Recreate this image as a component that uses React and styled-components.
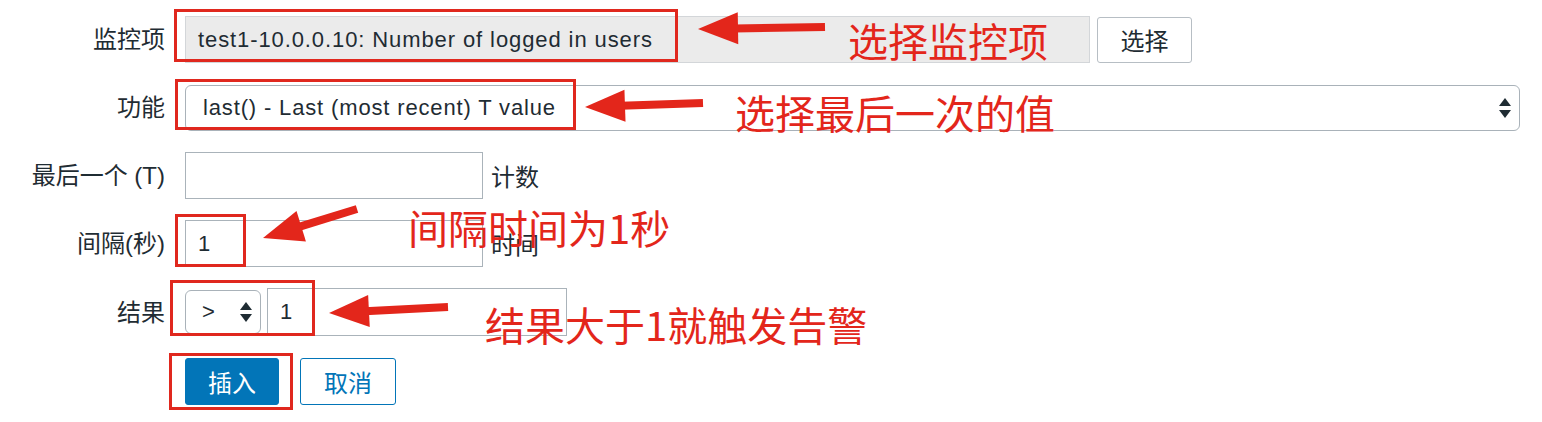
import React from "react";
import styled, { createGlobalStyle } from "styled-components";

const Global = createGlobalStyle`
  html, body { margin: 0; padding: 0; background: #fff; }
  body { font-family: "Liberation Sans", "Noto Sans CJK SC", sans-serif; color: #1f2c33; }
`;

const Page = styled.div`
  position: relative;
  width: 1542px;
  height: 422px;
  overflow: hidden;
  padding-top: 16px;
  box-sizing: border-box;
`;

const Form = styled.div`
  display: grid;
  grid-template-columns: 165px 1fr;
  column-gap: 20px;
  row-gap: 21px;
  width: 1520px;
  align-items: center;
`;

const Label = styled.div`
  text-align: right;
  font-size: 24px;
  line-height: 47px;
  white-space: nowrap;
`;

const Field = styled.div`
  display: flex;
  align-items: center;
  gap: ${(p) => p.$gap || 0}px;
  height: ${(p) => p.$h || 47}px;
`;

const ReadOnly = styled.div`
  box-sizing: border-box;
  width: 905px;
  height: 47px;
  background: #ebebeb;
  border: 1px solid #d3d6d9;
  padding-left: 12px;
  display: flex;
  align-items: center;
  font-size: 22px;
  letter-spacing: 0.9px;
`;

const PlainButton = styled.div`
  box-sizing: border-box;
  width: 95px;
  height: 46px;
  border: 1.5px solid #b7bec4;
  border-radius: 3px;
  background: #fff;
  display: flex;
  align-items: center;
  justify-content: center;
  font-size: 24px;
`;

const Select = styled.div`
  box-sizing: border-box;
  width: ${(p) => p.$w}px;
  height: ${(p) => p.$h || 46}px;
  border: 1.5px solid #a9b2b9;
  border-radius: 6px;
  background: #fff;
  display: flex;
  align-items: center;
  justify-content: space-between;
  padding: 0 ${(p) => p.$pr || 8}px 0 ${(p) => p.$pl || 17}px;
  font-size: 22px;
  letter-spacing: ${(p) => p.$ls || 0}px;
`;

const Spinner = () => (
  <svg width="12" height="20" viewBox="0 0 12 20">
    <polygon points="6,0 12,8 0,8" fill="#1f2c33" />
    <polygon points="0,12 12,12 6,20" fill="#1f2c33" />
  </svg>
);

const TextBox = styled.div`
  box-sizing: border-box;
  width: ${(p) => p.$w || 298}px;
  height: ${(p) => p.$h || 47}px;
  border: 1.5px solid #aab3ba;
  background: #fff;
  padding-left: 12px;
  display: flex;
  align-items: center;
  font-size: 22px;
`;

const Suffix = styled.span`
  font-size: 24px;
  margin-left: 8px;
`;

const Buttons = styled.div`
  display: flex;
  gap: 21px;
  height: 48px;
  align-items: center;
`;

const Btn = styled.div`
  box-sizing: border-box;
  width: ${(p) => (p.$primary ? 94 : 96)}px;
  height: 47px;
  border-radius: 3px;
  border: 1.5px solid #0275b8;
  background: ${(p) => (p.$primary ? "#0275b8" : "#fff")};
  color: ${(p) => (p.$primary ? "#fff" : "#0275b8")};
  display: flex;
  align-items: center;
  justify-content: center;
  font-size: 24px;
`;

/* annotation overlay */
const RedBox = styled.div`
  position: absolute;
  box-sizing: border-box;
  left: ${(p) => p.$x}px;
  top: ${(p) => p.$y}px;
  width: ${(p) => p.$w}px;
  height: ${(p) => p.$h}px;
  border: 3px solid #e0281e;
  pointer-events: none;
`;

const Note = styled.div`
  position: absolute;
  left: ${(p) => p.$x}px;
  top: ${(p) => p.$y}px;
  font-family: "Noto Sans CJK SC", "Liberation Sans", sans-serif;
  font-size: 40px;
  line-height: 40px;
  color: #e3261b;
  white-space: nowrap;
  letter-spacing: ${(p) => p.$ls || 0}px;
`;

const Overlay = styled.svg`
  position: absolute;
  left: 0;
  top: 0;
  pointer-events: none;
`;

function arrow(tx, ty, ex, ey, L = 40, hw = 16, sw = 8) {
  const dx = ex - tx;
  const dy = ey - ty;
  const len = Math.hypot(dx, dy);
  const ux = dx / len;
  const uy = dy / len;
  const nx = -uy;
  const ny = ux;
  const bx = tx + ux * L;
  const by = ty + uy * L;
  const head = [
    [tx, ty],
    [bx + nx * hw, by + ny * hw],
    [bx - nx * hw, by - ny * hw],
  ];
  const b2x = tx + ux * (L - 4);
  const b2y = ty + uy * (L - 4);
  const shaft = [
    [b2x + nx * sw / 2, b2y + ny * sw / 2],
    [ex + nx * sw / 2, ey + ny * sw / 2],
    [ex - nx * sw / 2, ey - ny * sw / 2],
    [b2x - nx * sw / 2, b2y - ny * sw / 2],
  ];
  const s = (pts) => pts.map((p) => p.join(",")).join(" ");
  return { head: s(head), shaft: s(shaft) };
}

const arrows = [
  arrow(698, 29, 825, 27),
  arrow(585, 107, 703, 103),
  arrow(263, 238, 357, 209),
  arrow(329, 313, 448, 307),
];

export default function App() {
  return (
    <>
      <Global />
      <Page>
        <Form>
          <Label>监控项</Label>
          <Field $gap={7}>
            <ReadOnly>test1-10.0.0.10: Number of logged in users</ReadOnly>
            <PlainButton>选择</PlainButton>
          </Field>

          <Label>功能</Label>
          <Field $h={46}>
            <Select $w={1335} $ls={0.85} $pl={17} $pr={8}>
              <span>last() - Last (most recent) T value</span>
              <Spinner />
            </Select>
          </Field>

          <Label>最后一个 (T)</Label>
          <Field>
            <TextBox />
            <Suffix>计数</Suffix>
          </Field>

          <Label>间隔(秒)</Label>
          <Field>
            <TextBox>1</TextBox>
            <Suffix>时间</Suffix>
          </Field>

          <Label>结果</Label>
          <Field $h={48} $gap={6}>
            <Select $w={76} $h={44} $pl={16} $pr={8}>
              <span>&gt;</span>
              <Spinner />
            </Select>
            <TextBox $w={300} $h={48}>1</TextBox>
          </Field>

          <div />
          <Buttons>
            <Btn $primary>插入</Btn>
            <Btn>取消</Btn>
          </Buttons>
        </Form>

        <RedBox $x={174} $y={9} $w={504} $h={53} />
        <RedBox $x={175} $y={79} $w={401} $h={51} />
        <RedBox $x={175} $y={214} $w={71} $h={53} />
        <RedBox $x={170} $y={280} $w={145} $h={56} />
        <RedBox $x={169} $y={353} $w={124} $h={57} />

        <Overlay width="1542" height="422" viewBox="0 0 1542 422">
          {arrows.map((a, i) => (
            <g key={i} fill="#e3261b">
              <polygon points={a.shaft} />
              <polygon points={a.head} />
            </g>
          ))}
        </Overlay>

        <Note $x={848} $y={20}>选择监控项</Note>
        <Note $x={735} $y={92}>选择最后一次的值</Note>
        <Note $x={408} $y={207}>间隔时间为1秒</Note>
        <Note $x={485} $y={304}>结果大于1就触发告警</Note>
      </Page>
    </>
  );
}
